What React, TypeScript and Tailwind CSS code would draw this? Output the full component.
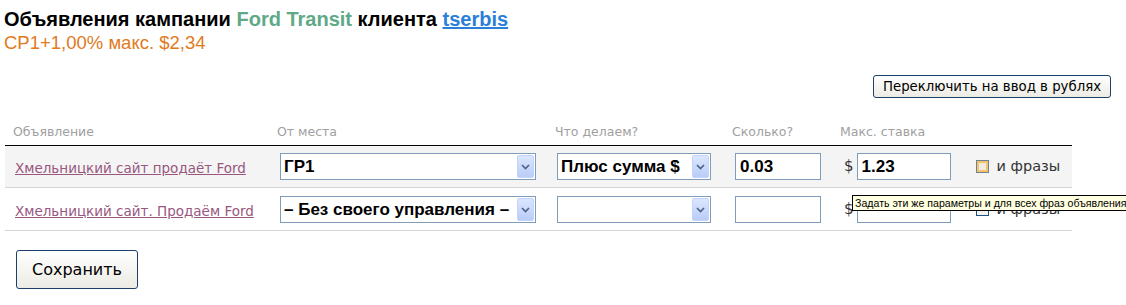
import React from "react";

const Chevron = () => (
  <svg width="9" height="6" viewBox="0 0 9 6">
    <path d="M1 1 L4.5 4.5 L8 1" fill="none" stroke="#4d6185" strokeWidth="1.6" />
  </svg>
);

function Select({ w, value }: { w: string; value?: string }) {
  return (
    <div className={`${w} h-[27px] border border-[#7f9db9] bg-white flex items-center justify-between pl-[3px] pr-[1px]`}>
      <span className="text-[17px] font-bold text-black whitespace-nowrap leading-[20px]" style={{ fontFamily: '"Liberation Sans", Arial, sans-serif' }}>
        {value}
      </span>
      <div className="w-[17px] h-[23px] shrink-0 rounded-[2px] border border-[#c3d3fd] bg-gradient-to-b from-[#dbe6fd] to-[#b9cdf8] flex items-center justify-center">
        <Chevron />
      </div>
    </div>
  );
}

function Input({ w, value }: { w: string; value?: string }) {
  return (
    <div className={`${w} h-[27px] border border-[#7f9db9] bg-white flex items-center pl-[4px]`}>
      <span className="text-[17px] font-bold text-black leading-[20px]" style={{ fontFamily: '"Liberation Sans", Arial, sans-serif' }}>
        {value}
      </span>
    </div>
  );
}

function Row({ link, sel1, sel2, n1, n2, bg, checkHover, children }: any) {
  return (
    <div className={`relative flex items-center h-[42px] border-b border-[#d4d4d4] ${bg}`}>
      <div className="w-[275px] shrink-0 pl-[10px]">
        <a className="text-[13.5px] text-[#98577f] underline whitespace-nowrap" style={{ fontFamily: '"DejaVu Sans", Verdana, sans-serif' }}>
          {link}
        </a>
      </div>
      <Select w="w-[256px]" value={sel1} />
      <div className="w-[21px]" />
      <Select w="w-[154px]" value={sel2} />
      <div className="w-[24px]" />
      <Input w="w-[86px]" value={n1} />
      <span className="ml-[23px] mr-[3px] text-[15px] text-[#333]" style={{ fontFamily: '"DejaVu Sans", Verdana, sans-serif' }}>$</span>
      <Input w="w-[94px]" value={n2} />
      {checkHover ? (
        <div className="ml-[25px] w-[13px] h-[13px] border border-[#6f7f96] bg-[#f3c46a] flex items-center justify-center">
          <div className="w-[7px] h-[7px] bg-[#efece2]" />
        </div>
      ) : (
        <div className="ml-[25px] w-[13px] h-[13px] border border-[#1c5180] bg-[#f3f3ef]" />
      )}
      <span className="ml-[8px] text-[14.5px] text-[#333] whitespace-nowrap" style={{ fontFamily: '"DejaVu Sans", Verdana, sans-serif' }}>
        и фразы
      </span>
      {children}
    </div>
  );
}

export default function App() {
  return (
    <div className="w-[1126px] h-[305px] overflow-hidden bg-white relative">
      <div className="pl-[4px] pt-[8px]" style={{ fontFamily: '"Liberation Sans", Arial, sans-serif' }}>
        <div className="text-[20px] font-bold leading-[23px] text-black whitespace-nowrap">
          Объявления кампании <span className="text-[#5fa987]">Ford Transit</span> клиента{" "}
          <a className="text-[#2a7fd8] underline">tserbis</a>
        </div>
        <div className="text-[18.5px] leading-[22px] text-[#e07a1c] mt-[1px]">CP1+1,00% макс. $2,34</div>
      </div>
      <div className="flex justify-end pr-[15px] mt-[21px]">
        <button
          className="h-[23px] w-[238px] rounded-[3px] border border-[#1c3f6e] bg-gradient-to-b from-white to-[#ecebe4] text-[13.3px] text-black leading-[20px]"
          style={{ fontFamily: '"DejaVu Sans", Verdana, sans-serif' }}
        >
          Переключить на ввод в рублях
        </button>
      </div>
      <div className="ml-[5px] w-[1067px] mt-[24px]">
        <div
          className="flex h-[24px] pt-[2px] pl-[8px] border-b border-black text-[12.5px] leading-[16px] text-[#a0a0a0]"
          style={{ fontFamily: '"DejaVu Sans", Verdana, sans-serif' }}
        >
          <div className="w-[264px]">Объявление</div>
          <div className="w-[278px]">От места</div>
          <div className="w-[177px]">Что делаем?</div>
          <div className="w-[108px]">Сколько?</div>
          <div>Макс. ставка</div>
        </div>
        <Row link="Хмельницкий сайт продаёт Ford" sel1="ГР1" sel2="Плюс сумма $" n1="0.03" n2="1.23" bg="bg-[#f4f4f4]" checkHover />
        <div className="h-[1px]" />
        <Row link="Хмельницкий сайт. Продаём Ford" sel1="– Без своего управления –" bg="bg-white">
          <div
            className="absolute left-[847px] top-[6px] h-[16px] border border-black bg-[#ffffe1] pl-[2px] pr-[3px] text-[10.6px] leading-[14px] text-black whitespace-nowrap"
            style={{ fontFamily: '"Liberation Sans", Tahoma, sans-serif' }}
          >
            Задать эти же параметры и для всех фраз объявления
          </div>
        </Row>
      </div>
      <div className="ml-[16px] mt-[19px]">
        <button
          className="w-[122px] h-[39px] rounded-[3px] border border-[#1c3f6e] bg-gradient-to-b from-white to-[#ecebe4] text-[16px] text-black"
          style={{ fontFamily: '"DejaVu Sans", Verdana, sans-serif' }}
        >
          Сохранить
        </button>
      </div>
    </div>
  );
}
